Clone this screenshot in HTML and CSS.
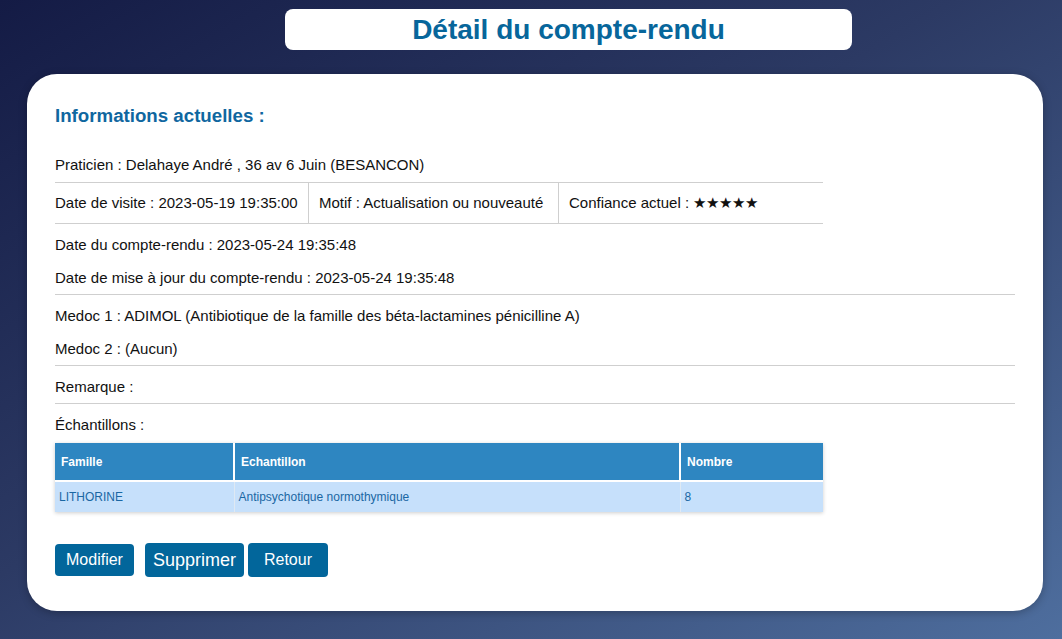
FILE: index.html
```html
<!DOCTYPE html>
<html lang="fr">
<head>
<meta charset="utf-8">
<title>Détail du compte-rendu</title>
<link rel="stylesheet" href="styles.css">
</head>
<body>
<div class="page">
  <header class="topbar">
    <h1 class="page-title">Détail du compte-rendu</h1>
  </header>
  <main class="card">
    <h2 class="section-title">Informations actuelles :</h2>
    <div class="line">Praticien : Delahaye André , 36 av 6 Juin (BESANCON)</div>
    <div class="info-row">
      <div class="cell cell-first">Date de visite : 2023-05-19 19:35:00</div>
      <div class="cell cell-mid">Motif : Actualisation ou nouveauté</div>
      <div class="cell cell-last">Confiance actuel : ★★★★★</div>
    </div>
    <div class="group group-nosep">
      <div class="line">Date du compte-rendu : 2023-05-24 19:35:48</div>
      <div class="line">Date de mise à jour du compte-rendu : 2023-05-24 19:35:48</div>
    </div>
    <div class="group">
      <div class="line">Medoc 1 : ADIMOL (Antibiotique de la famille des béta-lactamines pénicilline A)</div>
      <div class="line">Medoc 2 : (Aucun)</div>
    </div>
    <div class="group">
      <div class="line">Remarque :</div>
    </div>
    <div class="group">
      <div class="line">Échantillons :</div>
      <table class="samples">
        <thead>
          <tr><th class="c1">Famille</th><th class="c2">Echantillon</th><th class="c3">Nombre</th></tr>
        </thead>
        <tbody>
          <tr><td>LITHORINE</td><td>Antipsychotique normothymique</td><td>8</td></tr>
        </tbody>
      </table>
    </div>
    <div class="actions">
      <button class="btn btn-mod">Modifier</button>
      <button class="btn btn-sup">Supprimer</button>
      <button class="btn btn-ret">Retour</button>
    </div>
  </main>
</div>
</body>
</html>
```
FILE: styles.css
```css
html, body {
  margin: 0;
  padding: 0;
  height: 100%;
}
body {
  font-family: "Liberation Sans", Arial, sans-serif;
  background: linear-gradient(to bottom right, #141b45 0%, #2c3a64 45%, #4e6e9e 100%);
  color: #111;
  overflow: hidden;
}
.page {
  padding: 9px 19px 0 27px;
}
.topbar {
  width: 567px;
  margin-left: 258px;
  height: 41px;
  background: #fff;
  border-radius: 8px;
  display: flex;
  align-items: center;
  justify-content: center;
}
.page-title {
  margin: 0;
  font-size: 28px;
  line-height: 32px;
  font-weight: bold;
  color: #07669b;
}
.card {
  margin-top: 24px;
  width: 1016px;
  box-sizing: border-box;
  background: #fff;
  border-radius: 30px;
  padding: 31px 28px 34px;
  box-shadow: 0 2px 8px rgba(0,0,0,0.25);
}
.section-title {
  margin: 0 0 22px;
  font-size: 18.7px;
  line-height: 21px;
  font-weight: bold;
  color: #0f67a0;
}
.line {
  font-size: 15px;
  line-height: 17px;
  padding: 8px 0;
}
.info-row {
  width: 768px;
  display: flex;
  border-top: 1px solid #cfcfcf;
  border-bottom: 1px solid #cfcfcf;
  font-size: 15px;
  line-height: 17px;
  margin-top: 1px;
}
.cell {
  padding: 11px 10px 12px;
  box-sizing: border-box;
}
.cell-first { width: 254px; padding-left: 0; border-right: 1px solid #cfcfcf; }
.cell-mid { width: 250px; border-right: 1px solid #cfcfcf; }
.cell-last { flex: 1; }
.group {
  border-top: 1px solid #cfcfcf;
  padding-top: 4px;
}
.group-nosep {
  border-top: none;
  padding-top: 4px;
}
.samples {
  width: 768px;
  border-collapse: collapse;
  font-size: 12px;
  margin-top: 2px;
  box-shadow: 0 1px 4px rgba(0,0,0,0.2);
}
.samples th {
  background: #2e86c1;
  color: #fff;
  text-align: left;
  font-weight: bold;
  height: 38px;
  padding: 0 6px;
  box-sizing: border-box;
  border-left: 2px solid #fff;
}
.samples th:first-child, .samples td:first-child { border-left: none; }
.samples td {
  background: #c6e0fb;
  color: #1a67a3;
  height: 31px;
  padding: 0 4px;
  border-left: 1px solid #dfe9f3;
  border-top: 2px solid #fff;
  box-sizing: border-box;
}
.samples .c1 { width: 179px; }
.samples .c3 { width: 143px; }
.actions {
  display: flex;
  align-items: center;
  margin-top: 31px;
}
.btn {
  font-family: "Liberation Sans", Arial, sans-serif;
  background: #02669b;
  color: #fff;
  border: none;
  border-radius: 4px;
  cursor: pointer;
}
.btn-mod {
  font-size: 16px;
  line-height: 18px;
  height: 32px;
  padding: 0 11px;
  margin-right: 11px;
}
.btn-sup {
  font-size: 18px;
  line-height: 20px;
  height: 34px;
  padding: 0 8px;
  margin-right: 4px;
}
.btn-ret {
  font-size: 16px;
  line-height: 18px;
  height: 34px;
  padding: 0 16px;
}
```
